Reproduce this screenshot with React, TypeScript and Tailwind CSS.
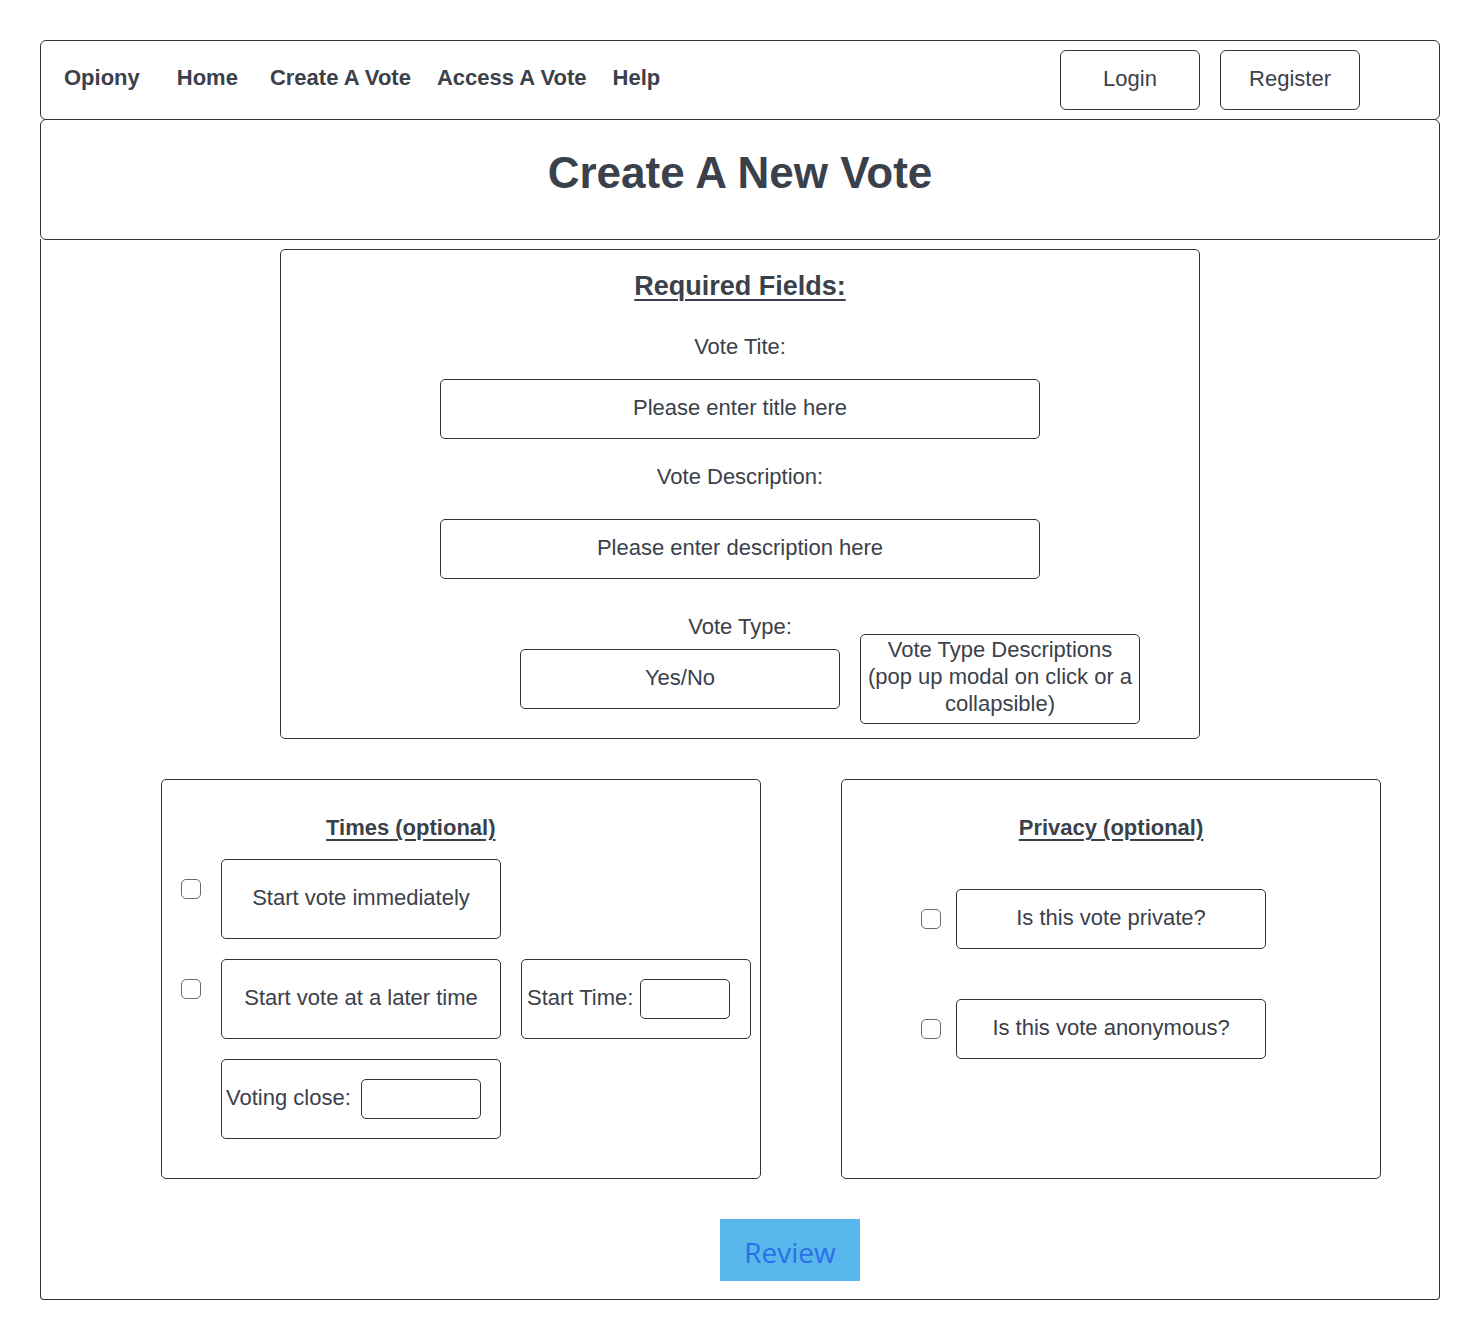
import React from 'react'

const font = { fontFamily: '"Liberation Sans", Arial, sans-serif' }

function Check() {
  return <div className="w-[20px] h-[20px] shrink-0 rounded-[5px] border border-[#6b6b6b] bg-white" />
}

export default function App() {
  return (
    <div className="min-h-[1340px] bg-white pt-[40px] pl-[40px] text-[#3a414b]" style={font}>
      <div className="w-[1400px]">
        {/* top nav */}
        <nav className="h-[80px] flex items-center border border-[#333] rounded-[6px] pl-[23px] pr-[79px]">
          <div className="flex items-center pb-[6px] text-[22px] font-bold">
            <a>Opiony</a>
            <a className="ml-[37px]">Home</a>
            <a className="ml-[32px]">Create A Vote</a>
            <a className="ml-[26px]">Access A Vote</a>
            <a className="ml-[26px]">Help</a>
          </div>
          <div className="ml-auto flex gap-[20px]">
            <button className="w-[140px] h-[60px] border border-[#333] rounded-[6px] text-[22px] pb-[4px]">Login</button>
            <button className="w-[140px] h-[60px] border border-[#333] rounded-[6px] text-[22px] pb-[4px]">Register</button>
          </div>
        </nav>

        <div className="-mt-px h-[121px] flex items-center justify-center pb-[13px] border border-[#333] rounded-[6px]">
          <h1 className="text-[44px] leading-[44px] font-bold">Create A New Vote</h1>
        </div>

        <div className="-mt-px h-[1061px] border-x border-b border-[#333] rounded-b-[4px] pt-[10px]">
          {/* required fields */}
          <section className="mx-auto w-[920px] h-[490px] border border-[#333] rounded-[5px] flex flex-col items-center text-[22px]">
            <h2 className="mt-[20px] text-[27px] leading-[32px] font-bold underline underline-offset-[4px] decoration-2">Required Fields:</h2>
            <div className="mt-[33px] leading-[24px]">Vote Tite:</div>
            <div className="mt-[20px] w-[600px] h-[60px] border border-[#333] rounded-[5px] flex items-center justify-center pb-[4px]">
              Please enter title here
            </div>
            <div className="mt-[26px] leading-[24px]">Vote Description:</div>
            <div className="mt-[30px] w-[600px] h-[60px] border border-[#333] rounded-[5px] flex items-center justify-center pb-[4px]">
              Please enter description here
            </div>
            <div className="mt-[38px] leading-[20px]">Vote Type:</div>
            <div className="-mt-[3px] self-stretch pl-[239px] flex items-center gap-[20px]">
              <div className="w-[320px] h-[60px] border border-[#333] rounded-[5px] flex items-center justify-center pb-[4px]">Yes/No</div>
              <div className="w-[280px] h-[90px] border border-[#333] rounded-[5px] flex items-center justify-center text-center leading-[27px] pb-[6px] whitespace-nowrap">
                Vote Type Descriptions
                <br />
                (pop up modal on click or a
                <br />
                collapsible)
              </div>
            </div>
          </section>

          <div className="mt-[40px] pl-[120px] flex gap-[80px] text-[22px]">
            {/* times */}
            <section className="w-[600px] h-[400px] border border-[#333] rounded-[5px] pl-[19px]">
              <h3 className="mt-[34px] ml-[145px] leading-[28px] font-bold underline underline-offset-[4px] decoration-2">Times (optional)</h3>
              <div className="mt-[17px] flex items-start gap-[20px]">
                <div className="mt-[20px]"><Check /></div>
                <div className="w-[280px] h-[80px] border border-[#333] rounded-[5px] flex items-center justify-center pb-[4px]">Start vote immediately</div>
              </div>
              <div className="mt-[20px] flex items-start gap-[20px]">
                <div className="mt-[20px]"><Check /></div>
                <div className="w-[280px] h-[80px] border border-[#333] rounded-[5px] flex items-center justify-center pb-[4px]">Start vote at a later time</div>
                <div className="w-[230px] h-[80px] border border-[#333] rounded-[5px] flex items-center gap-[7px] pl-[5px]">
                  <span className="pb-[4px] whitespace-nowrap">Start Time:</span>
                  <div className="w-[90px] h-[40px] shrink-0 border border-[#333] rounded-[5px]" />
                </div>
              </div>
              <div className="mt-[20px] pl-[40px]">
                <div className="w-[280px] h-[80px] border border-[#333] rounded-[5px] flex items-center gap-[10px] pl-[4px]">
                  <span className="pb-[4px] whitespace-nowrap">Voting close:</span>
                  <div className="w-[120px] h-[40px] shrink-0 border border-[#333] rounded-[5px]" />
                </div>
              </div>
            </section>

            {/* privacy */}
            <section className="w-[540px] h-[400px] border border-[#333] rounded-[5px] flex flex-col">
              <h3 className="mt-[34px] self-center leading-[28px] font-bold underline underline-offset-[4px] decoration-2">Privacy (optional)</h3>
              <div className="mt-[47px] pl-[79px] flex items-center gap-[15px]">
                <Check />
                <div className="w-[310px] h-[60px] border border-[#333] rounded-[5px] flex items-center justify-center pb-[4px]">Is this vote private?</div>
              </div>
              <div className="mt-[50px] pl-[79px] flex items-center gap-[15px]">
                <Check />
                <div className="w-[310px] h-[60px] border border-[#333] rounded-[5px] flex items-center justify-center pb-[4px]">Is this vote anonymous?</div>
              </div>
            </section>
          </div>

          <div className="mt-[40px] pl-[679px]">
            <button
              className="w-[140px] h-[62px] bg-[#58b8ec] text-[#2a6fe8] text-[28px] flex items-center justify-center pt-[4px]"
              style={{ fontFamily: '"Open Sans", "Noto Sans", sans-serif' }}
            >
              Review
            </button>
          </div>
        </div>
      </div>
    </div>
  )
}
